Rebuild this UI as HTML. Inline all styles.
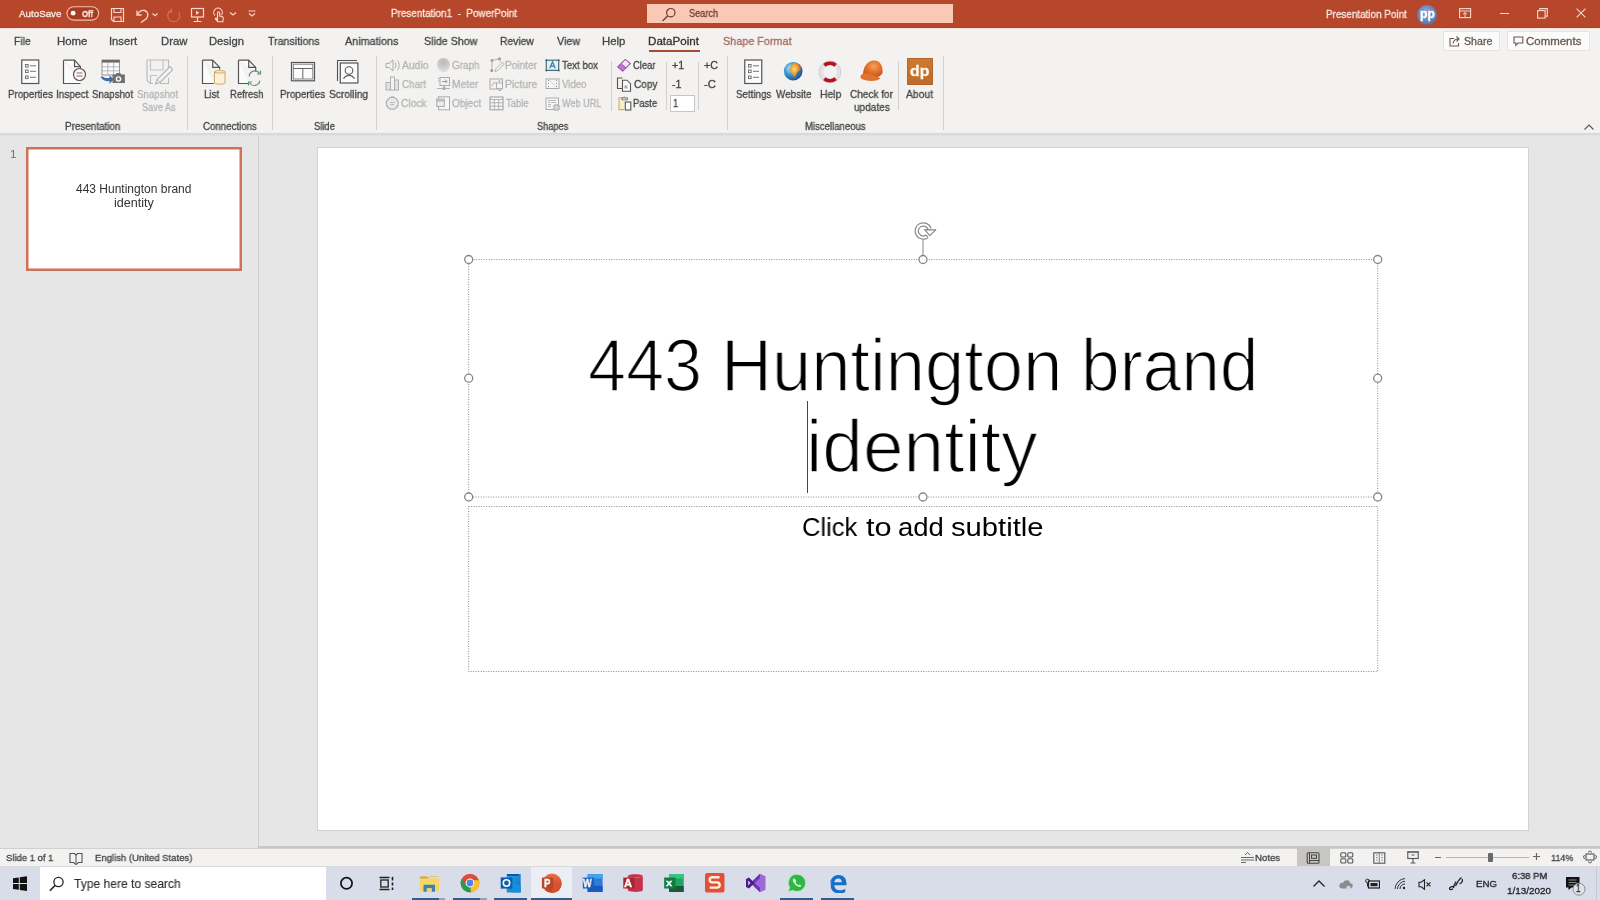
<!DOCTYPE html>
<html><head><meta charset="utf-8"><title>PowerPoint</title>
<style>
*{margin:0;padding:0;box-sizing:border-box}
html,body{width:1600px;height:900px;overflow:hidden;background:#e6e6e6;position:relative;font-family:"Liberation Sans",sans-serif}
.a{position:absolute;display:block}
.t{position:absolute;white-space:pre;transform-origin:0 0;will-change:transform;-webkit-text-stroke:0.3px currentColor}
</style></head><body>
<div class="a" style="left:0px;top:0px;width:1600px;height:28px;background:#b7472a"></div>
<div class="a" style="left:0px;top:28px;width:1600px;height:105px;background:#f3f2f1"></div>
<div class="a" style="left:0px;top:27px;width:1600px;height:1px;background:#a8432b"></div>
<div class="a" style="left:0px;top:28px;width:1600px;height:1px;background:#f6e4dc"></div>
<div class="a" style="left:0px;top:133px;width:1600px;height:3px;background:linear-gradient(#d5d4d3,#e4e4e4)"></div>
<div class="a" style="left:0px;top:136px;width:1600px;height:710px;background:#e6e6e6"></div>
<div class="a" style="left:257.5px;top:136px;width:1.2px;height:712px;background:#cdcdcd"></div>
<div class="a" style="left:318px;top:148px;width:1210px;height:682px;background:#fff;box-shadow:0 0 0 1px #d2d2d2"></div>
<div class="a" style="left:258px;top:846px;width:1342px;height:1.5px;background:#c8c8c8"></div>
<div class="a" style="left:0px;top:848px;width:1600px;height:1px;background:#d0d0d0"></div>
<div class="a" style="left:0px;top:849px;width:1600px;height:17px;background:#f3f2f1"></div>
<div class="a" style="left:0px;top:866px;width:1600px;height:1px;background:#dadada"></div>
<div class="a" style="left:0px;top:867px;width:1600px;height:33px;background:#d9dce9"></div>
<div class="t" style="left:19.00px;top:9.00px;font-size:9.75px;line-height:9.75px;color:#fbeae4;transform:scaleX(1.0041);">AutoSave</div>
<div class="t" style="left:391.21px;top:8.00px;font-size:10.50px;line-height:10.50px;color:#fbeae4;transform:scaleX(0.9418);">Presentation1  -  PowerPoint</div>
<div class="a" style="left:647px;top:4px;width:306px;height:19px;background:#f9c9b6"></div>
<div class="t" style="left:688.59px;top:8.00px;font-size:10.50px;line-height:10.50px;color:#6b3d30;transform:scaleX(0.8729);">Search</div>
<div class="t" style="left:1326.21px;top:9.00px;font-size:11.00px;line-height:11.00px;color:#fbeae4;transform:scaleX(0.8995);">Presentation Point</div>
<svg class="a" style="left:66px;top:6px;" width="34" height="15" viewBox="0 0 34 15"><rect x="1" y="0.7" width="31.6" height="13.4" rx="6.7" fill="#a73c22" stroke="#f3c0ae" stroke-width="1.1"/><circle cx="7.1" cy="7.2" r="2.4" fill="#fff"/></svg>
<div class="t" style="left:81.99px;top:8.71px;font-size:9.75px;line-height:9.75px;color:#fbe6de;font-weight:bold;transform:scaleX(0.7957);">Off</div>
<svg class="a" style="left:110px;top:7px;" width="15" height="16" viewBox="0 0 15 16"><path d="M1.5 1.5h12v13h-10l-2-2z" fill="none" stroke="#f8d8cc" stroke-width="1.2"/><path d="M4 1.5v4h7v-4M4 14.5v-4.5h7v4.5" fill="none" stroke="#f8d8cc" stroke-width="1.1"/></svg>
<svg class="a" style="left:134px;top:8px;" width="26" height="16" viewBox="0 0 26 16"><path d="M3 2.5v4.5h4.5" fill="none" stroke="#f8d8cc" stroke-width="1.3"/><path d="M3.3 6.8C5 3.5 8 2 10.5 2.5 14 3.3 15 7.5 12.5 10.5L7 14.5" fill="none" stroke="#f8d8cc" stroke-width="1.3"/><path d="M18.5 5.5l2.5 2.2 2.5-2.2" fill="none" stroke="#f8d8cc" stroke-width="1.1"/></svg>
<svg class="a" style="left:165px;top:8px;" width="17" height="16" viewBox="0 0 17 16"><path d="M6 2.3A6 6 0 1 0 13.5 4" fill="none" stroke="#dc7058" stroke-width="1.1"/><path d="M6.5 0.8v3.2h-3.2" fill="none" stroke="#dc7058" stroke-width="1.1"/></svg>
<svg class="a" style="left:190px;top:7px;" width="15" height="16" viewBox="0 0 15 16"><rect x="1.5" y="1.5" width="12" height="8.5" fill="none" stroke="#f8d8cc" stroke-width="1.2"/><path d="M6 3.8v4l3.3-2z" fill="#f8d8cc"/><path d="M7.5 10v4.5M3.5 14.5h8" fill="none" stroke="#f8d8cc" stroke-width="1.2"/></svg>
<svg class="a" style="left:211px;top:7px;" width="14" height="17" viewBox="0 0 14 17"><path d="M4 8.5A4.3 4.3 0 1 1 10.5 8" fill="none" stroke="#f8d8cc" stroke-width="1.1"/><path d="M6.5 13V5.8a1.1 1.1 0 0 1 2.2 0V9l2.5.6c.9.3 1.2 1 1.1 2l-.5 3.2H6.8L4.5 12.2c-.6-.8.4-1.6 1-1z" fill="none" stroke="#f8d8cc" stroke-width="1.1"/></svg>
<svg class="a" style="left:229px;top:11px;" width="9" height="6" viewBox="0 0 9 6"><path d="M1 1.5l3 2.5 3-2.5" fill="none" stroke="#f8d8cc" stroke-width="1.2"/></svg>
<svg class="a" style="left:247px;top:9px;" width="10" height="9" viewBox="0 0 10 9"><path d="M1.5 2h7M2 4.5l3 2.5 3-2.5" fill="none" stroke="#f8d8cc" stroke-width="1.2"/></svg>
<svg class="a" style="left:661px;top:7px;" width="16" height="15" viewBox="0 0 16 15"><circle cx="9.8" cy="5.7" r="4.2" fill="none" stroke="#6b3d30" stroke-width="1.2"/><path d="M6.8 8.8L1.5 14" stroke="#6b3d30" stroke-width="1.3"/></svg>
<div class="a" style="left:1416.6px;top:4.8px;width:20px;height:20px;border-radius:50%;background:radial-gradient(circle at 45% 40%,#9fb0d6 0%,#6d88bd 45%,#3f5f9f 100%)"></div>
<div class="t" style="left:1419.71px;top:7.60px;font-size:12.00px;line-height:12.00px;color:#fff;font-weight:bold;transform:scaleX(1.0090);">pp</div>
<svg class="a" style="left:1459px;top:8px;" width="13" height="11" viewBox="0 0 13 11"><rect x="0.6" y="0.6" width="11" height="9" fill="none" stroke="#f8d8cc" stroke-width="1.1"/><path d="M0.6 3h11M6 4.5v5M4 6.3l2-1.8 2 1.8" fill="none" stroke="#f8d8cc" stroke-width="1"/></svg>
<div class="a" style="left:1500px;top:13px;width:9px;height:1px;background:#f8d8cc"></div>
<svg class="a" style="left:1537px;top:8px;" width="11" height="11" viewBox="0 0 11 11"><rect x="0.6" y="2.6" width="7.5" height="7.5" fill="none" stroke="#f8d8cc" stroke-width="1.1"/><path d="M2.8 2.6V0.6h7.5v7.5H8.1" fill="none" stroke="#f8d8cc" stroke-width="1.1"/></svg>
<svg class="a" style="left:1576px;top:8px;" width="10" height="10" viewBox="0 0 10 10"><path d="M0.6 0.6l8.8 8.8M9.4 0.6L0.6 9.4" stroke="#f8d8cc" stroke-width="1.1"/></svg>
<div class="t" style="left:13.66px;top:36.00px;font-size:11.00px;line-height:11.00px;color:#444;transform:scaleX(0.9489);">File</div>
<div class="t" style="left:56.59px;top:36.00px;font-size:11.00px;line-height:11.00px;color:#444;transform:scaleX(1.0379);">Home</div>
<div class="t" style="left:109.49px;top:36.00px;font-size:11.00px;line-height:11.00px;color:#444;transform:scaleX(1.0206);">Insert</div>
<div class="t" style="left:160.60px;top:36.00px;font-size:11.00px;line-height:11.00px;color:#444;transform:scaleX(1.0280);">Draw</div>
<div class="t" style="left:209.10px;top:36.00px;font-size:11.00px;line-height:11.00px;color:#444;transform:scaleX(1.0210);">Design</div>
<div class="t" style="left:267.79px;top:36.00px;font-size:11.00px;line-height:11.00px;color:#444;transform:scaleX(0.9659);">Transitions</div>
<div class="t" style="left:345.00px;top:36.00px;font-size:11.00px;line-height:11.00px;color:#444;transform:scaleX(0.9813);">Animations</div>
<div class="t" style="left:423.52px;top:36.00px;font-size:11.00px;line-height:11.00px;color:#444;transform:scaleX(0.9714);">Slide Show</div>
<div class="t" style="left:500.18px;top:36.00px;font-size:11.00px;line-height:11.00px;color:#444;transform:scaleX(0.9375);">Review</div>
<div class="t" style="left:556.95px;top:36.00px;font-size:11.00px;line-height:11.00px;color:#444;transform:scaleX(0.9748);">View</div>
<div class="t" style="left:602.09px;top:36.00px;font-size:11.00px;line-height:11.00px;color:#444;transform:scaleX(1.0336);">Help</div>
<div class="t" style="left:648.07px;top:36.00px;font-size:11.00px;line-height:11.00px;color:#323130;transform:scaleX(1.0559);">DataPoint</div>
<div class="t" style="left:722.51px;top:36.00px;font-size:11.00px;line-height:11.00px;color:#a46a5a;transform:scaleX(0.9836);">Shape Format</div>
<div class="a" style="left:649px;top:49.5px;width:51px;height:2.2px;background:#a84b32"></div>
<div class="a" style="left:1444px;top:32px;width:55px;height:18px;background:#fbfbfb;box-shadow:0 0 0 1px #e6e4e2"></div>
<div class="a" style="left:1508px;top:32px;width:81px;height:18px;background:#fbfbfb;box-shadow:0 0 0 1px #e6e4e2"></div>
<div class="t" style="left:1463.52px;top:37.00px;font-size:10.25px;line-height:10.25px;color:#6d5650;transform:scaleX(1.0381);">Share</div>
<div class="t" style="left:1526.43px;top:37.00px;font-size:10.25px;line-height:10.25px;color:#6d5650;transform:scaleX(1.1173);">Comments</div>
<svg class="a" style="left:1449px;top:35px;" width="12" height="12" viewBox="0 0 12 12"><path d="M5 3.5H1v7.5h8.5V8" fill="none" stroke="#6d5650" stroke-width="1.1"/><path d="M4 8.5c0.5-3 2.5-4.5 5.5-4.5M7.5 1.5L10 4 7.5 6.5" fill="none" stroke="#6d5650" stroke-width="1.1"/></svg>
<svg class="a" style="left:1513px;top:36px;" width="11" height="11" viewBox="0 0 11 11"><path d="M1 1h8.8v6H5L2.8 9.3V7H1z" fill="none" stroke="#6d5650" stroke-width="1.1"/></svg>
<svg class="a" style="left:1583px;top:123px;" width="12" height="8" viewBox="0 0 12 8"><path d="M1.5 6.5L6 2l4.5 4.5" fill="none" stroke="#555" stroke-width="1.1"/></svg>
<div class="t" style="left:7.91px;top:89.00px;font-size:11.00px;line-height:11.00px;color:#444;transform:scaleX(0.8958);">Properties</div>
<div class="t" style="left:55.80px;top:89.00px;font-size:11.00px;line-height:11.00px;color:#444;transform:scaleX(0.9105);">Inspect</div>
<div class="t" style="left:92.06px;top:89.00px;font-size:11.00px;line-height:11.00px;color:#444;transform:scaleX(0.8819);">Snapshot</div>
<div class="t" style="left:137.06px;top:89.00px;font-size:11.00px;line-height:11.00px;color:#b4b4b4;transform:scaleX(0.8819);">Snapshot</div>
<div class="t" style="left:141.59px;top:102.00px;font-size:11.00px;line-height:11.00px;color:#b4b4b4;transform:scaleX(0.8357);">Save As</div>
<div class="t" style="left:65.21px;top:122.00px;font-size:10.00px;line-height:10.00px;color:#444;transform:scaleX(0.9872);">Presentation</div>
<div class="t" style="left:203.71px;top:89.00px;font-size:11.00px;line-height:11.00px;color:#444;transform:scaleX(0.8967);">List</div>
<div class="t" style="left:230.24px;top:89.00px;font-size:11.00px;line-height:11.00px;color:#444;transform:scaleX(0.8671);">Refresh</div>
<div class="t" style="left:202.52px;top:122.00px;font-size:10.00px;line-height:10.00px;color:#444;transform:scaleX(0.9680);">Connections</div>
<div class="t" style="left:280.21px;top:89.00px;font-size:11.00px;line-height:11.00px;color:#444;transform:scaleX(0.8999);">Properties</div>
<div class="t" style="left:328.54px;top:89.00px;font-size:11.00px;line-height:11.00px;color:#444;transform:scaleX(0.9274);">Scrolling</div>
<div class="t" style="left:313.58px;top:122.00px;font-size:10.00px;line-height:10.00px;color:#444;transform:scaleX(0.9368);">Slide</div>
<div class="t" style="left:402.00px;top:60.00px;font-size:10.50px;line-height:10.50px;color:#b4b4b4;transform:scaleX(0.9846);">Audio</div>
<div class="t" style="left:401.51px;top:79.00px;font-size:10.50px;line-height:10.50px;color:#b4b4b4;transform:scaleX(0.9364);">Chart</div>
<div class="t" style="left:401.49px;top:98.00px;font-size:10.50px;line-height:10.50px;color:#b4b4b4;transform:scaleX(0.9718);">Clock</div>
<div class="t" style="left:452.10px;top:60.00px;font-size:10.50px;line-height:10.50px;color:#b4b4b4;transform:scaleX(0.9434);">Graph</div>
<div class="t" style="left:451.77px;top:79.00px;font-size:10.50px;line-height:10.50px;color:#b4b4b4;transform:scaleX(0.9834);">Meter</div>
<div class="t" style="left:452.15px;top:98.00px;font-size:10.50px;line-height:10.50px;color:#b4b4b4;transform:scaleX(0.9541);">Object</div>
<div class="t" style="left:505.19px;top:60.00px;font-size:10.50px;line-height:10.50px;color:#b4b4b4;transform:scaleX(0.9617);">Pointer</div>
<div class="t" style="left:505.17px;top:79.00px;font-size:10.50px;line-height:10.50px;color:#b4b4b4;transform:scaleX(0.9891);">Picture</div>
<div class="t" style="left:505.81px;top:98.00px;font-size:10.50px;line-height:10.50px;color:#b4b4b4;transform:scaleX(0.9012);">Table</div>
<div class="t" style="left:561.95px;top:79.00px;font-size:10.50px;line-height:10.50px;color:#b4b4b4;transform:scaleX(0.9161);">Video</div>
<div class="t" style="left:561.95px;top:98.00px;font-size:10.50px;line-height:10.50px;color:#b4b4b4;transform:scaleX(0.8678);">Web URL</div>
<div class="t" style="left:561.81px;top:60.00px;font-size:10.50px;line-height:10.50px;color:#444;transform:scaleX(0.9227);">Text box</div>
<div class="t" style="left:633.33px;top:60.00px;font-size:10.50px;line-height:10.50px;color:#444;transform:scaleX(0.8949);">Clear</div>
<div class="t" style="left:633.50px;top:79.00px;font-size:10.50px;line-height:10.50px;color:#444;transform:scaleX(0.9586);">Copy</div>
<div class="t" style="left:633.24px;top:98.00px;font-size:10.50px;line-height:10.50px;color:#444;transform:scaleX(0.9014);">Paste</div>
<div class="t" style="left:671.96px;top:60.00px;font-size:10.50px;line-height:10.50px;color:#444;transform:scaleX(1.0207);">+1</div>
<div class="t" style="left:672.02px;top:79.00px;font-size:10.50px;line-height:10.50px;color:#444;transform:scaleX(1.0119);">-1</div>
<div class="t" style="left:704.47px;top:60.00px;font-size:10.50px;line-height:10.50px;color:#444;transform:scaleX(1.0148);">+C</div>
<div class="t" style="left:704.49px;top:79.00px;font-size:10.50px;line-height:10.50px;color:#444;transform:scaleX(1.0745);">-C</div>
<div class="a" style="left:670px;top:95px;width:25px;height:17px;background:#fff;box-shadow:inset 0 0 0 1px #c6c6c6"></div>
<div class="t" style="left:673.31px;top:98.00px;font-size:10.50px;line-height:10.50px;color:#444;transform:scaleX(0.8758);">1</div>
<div class="t" style="left:536.59px;top:122.00px;font-size:10.00px;line-height:10.00px;color:#444;transform:scaleX(0.9215);">Shapes</div>
<div class="t" style="left:736.36px;top:89.00px;font-size:11.00px;line-height:11.00px;color:#444;transform:scaleX(0.8872);">Settings</div>
<div class="t" style="left:775.95px;top:89.00px;font-size:11.00px;line-height:11.00px;color:#444;transform:scaleX(0.8976);">Website</div>
<div class="t" style="left:819.77px;top:89.00px;font-size:11.00px;line-height:11.00px;color:#444;transform:scaleX(0.9443);">Help</div>
<div class="t" style="left:849.80px;top:89.00px;font-size:11.00px;line-height:11.00px;color:#444;transform:scaleX(0.9113);">Check for</div>
<div class="t" style="left:853.75px;top:102.00px;font-size:11.00px;line-height:11.00px;color:#444;transform:scaleX(0.9143);">updates</div>
<div class="t" style="left:906.00px;top:89.00px;font-size:11.00px;line-height:11.00px;color:#444;transform:scaleX(0.9422);">About</div>
<div class="t" style="left:804.73px;top:122.00px;font-size:10.00px;line-height:10.00px;color:#444;transform:scaleX(0.9566);">Miscellaneous</div>
<div class="a" style="left:187px;top:56px;width:1px;height:74px;background:#d2d0ce"></div>
<div class="a" style="left:272px;top:56px;width:1px;height:74px;background:#d2d0ce"></div>
<div class="a" style="left:376px;top:56px;width:1px;height:74px;background:#d2d0ce"></div>
<div class="a" style="left:727px;top:56px;width:1px;height:74px;background:#d2d0ce"></div>
<div class="a" style="left:943px;top:56px;width:1px;height:74px;background:#d2d0ce"></div>
<div class="a" style="left:611px;top:61px;width:1px;height:50px;background:#d2d0ce"></div>
<div class="a" style="left:666px;top:62px;width:1px;height:48px;background:#d2d0ce"></div>
<div class="a" style="left:698px;top:62px;width:1px;height:48px;background:#d2d0ce"></div>
<div class="a" style="left:898px;top:61px;width:1px;height:49px;background:#d2d0ce"></div>
<svg class="a" style="left:21px;top:59px;" width="19" height="26" viewBox="0 0 19 26"><rect x="0.75" y="1" width="17" height="23.5" fill="#fbfbfb" stroke="#555" stroke-width="1.2"/><rect x="4.5" y="5.5" width="2.6" height="2.6" fill="none" stroke="#666" stroke-width="0.9"/><rect x="4.5" y="11" width="2.6" height="2.6" fill="none" stroke="#666" stroke-width="0.9"/><rect x="4.5" y="17" width="2.6" height="2.6" fill="none" stroke="#666" stroke-width="0.9"/><path d="M9 6.8h6M9 12.3h6M9 18.3h6" stroke="#777" stroke-width="1"/></svg>
<svg class="a" style="left:62px;top:59px;" width="25" height="26" viewBox="0 0 25 26"><path d="M1.5 1.2h11l6 6.5v7M12.5 1.2v6.5h6M18.5 24.5H1.5V1.2" fill="#fbfbfb" stroke="#555" stroke-width="1.2"/><circle cx="17.5" cy="15.5" r="6" fill="#fbfbfb" stroke="#555" stroke-width="1.2"/><path d="M14.5 14h6M14.5 17h6" stroke="#b0506a" stroke-width="1.1"/></svg>
<svg class="a" style="left:100px;top:59px;" width="27" height="27" viewBox="0 0 27 27"><rect x="2" y="1" width="17.5" height="15" fill="#fafafa" stroke="#888" stroke-width="0.9"/><rect x="2" y="1" width="17.5" height="2.6" fill="#6a6a6a"/><path d="M7.8 3.5v12.5M13.6 3.5v12.5M2 7.8h17.5M2 11.8h17.5" stroke="#aaa" stroke-width="0.8"/><path d="M12.5 15.5h3l1.2-1.6h3.5l1.2 1.6h3.5v8.5h-12.4z" fill="#6f6f6f"/><circle cx="18.5" cy="20" r="2.8" fill="#fff"/><circle cx="18.5" cy="20" r="1.4" fill="#6f6f6f"/><path d="M0.5 18.3c2.5 3.2 5.5 4.2 9 3.8v2.7l4.3-4.3-4.3-4.3v2.8c-3 0.3-5.5-0.2-7.5-1.8z" fill="#3d709e"/></svg>
<svg class="a" style="left:145px;top:59px;" width="28" height="27" viewBox="0 0 28 27"><path d="M2 1h21.5v11M23.5 19v5.5H15M8 24.5H5.5L2 21.5V1" fill="none" stroke="#b9b9b9" stroke-width="1.1"/><path d="M5.5 1v10h12.5V1M5.5 24.5v-8h7" fill="none" stroke="#c2c2c2" stroke-width="1.1"/><path d="M10.5 25l1.5-4.5 13-13 3 3-13 13z" fill="#f2f2f2" stroke="#b5b5b5" stroke-width="1.1"/><path d="M12 20.5l3 3" stroke="#b5b5b5" stroke-width="1"/></svg>
<svg class="a" style="left:201px;top:59px;" width="26" height="27" viewBox="0 0 26 27"><path d="M1.5 1.2h10.2l7 7.2v2M11.7 1.2v7.2h7M12.8 24.5H1.5V1.2" fill="#fbfbfb" stroke="#555" stroke-width="1.2"/><path d="M13.5 12.8c0-1.6 10.5-1.6 10.5 0v11c0 1.8-10.5 1.8-10.5 0z" fill="#fdf2d8" stroke="#c9a66a" stroke-width="1"/><path d="M13.5 12.8c0 1.6 10.5 1.6 10.5 0" fill="none" stroke="#c9a66a" stroke-width="1"/></svg>
<svg class="a" style="left:237px;top:59px;" width="27" height="28" viewBox="0 0 27 28"><path d="M1.5 1.2h10.2l7 7.2v4M11.7 1.2v7.2h7M12 24.5H1.5V1.2" fill="#fbfbfb" stroke="#555" stroke-width="1.2"/><path d="M12.3 17.5a5.6 5.6 0 0 1 10.2-3.2M22.8 21.5a5.6 5.6 0 0 1-10.2 2.5" fill="none" stroke="#5b9272" stroke-width="1.2"/><path d="M23.5 11.5v3.5H20M11.5 26.5V23H15" fill="none" stroke="#5b9272" stroke-width="1.2"/></svg>
<svg class="a" style="left:290px;top:61px;" width="26" height="21" viewBox="0 0 26 21"><rect x="1.5" y="1.5" width="23" height="18.3" fill="#fbfbfb" stroke="#555" stroke-width="1.2"/><rect x="3.3" y="3.2" width="19.5" height="14.8" fill="none" stroke="#777" stroke-width="0.9"/><path d="M3.3 7.5h19.5M12.8 7.5v10.5" stroke="#666" stroke-width="1"/></svg>
<svg class="a" style="left:336px;top:59px;" width="24" height="26" viewBox="0 0 24 26"><path d="M1.5 22V1.5h19.5" fill="none" stroke="#555" stroke-width="1.1"/><rect x="4.3" y="4" width="17.6" height="20" fill="#fbfbfb" stroke="#555" stroke-width="1.2"/><circle cx="13" cy="11.5" r="3.8" fill="none" stroke="#555" stroke-width="1.1"/><path d="M7.5 19.8c2.8-4.6 8.3-4.6 11 0" fill="none" stroke="#555" stroke-width="1.1"/></svg>
<svg class="a" style="left:385px;top:59px;" width="15" height="13" viewBox="0 0 15 13"><path d="M1 4.5h3l4-3.5v11l-4-3.5h-3z" fill="none" stroke="#aaa" stroke-width="1"/><path d="M10 3.5c1.3 1.7 1.3 4.3 0 6M12.5 1.5c2.2 2.8 2.2 7.2 0 10" fill="none" stroke="#aaa" stroke-width="1"/></svg>
<svg class="a" style="left:385px;top:76px;" width="15" height="15" viewBox="0 0 15 15"><rect x="1" y="6.5" width="4.5" height="7.5" fill="#e2e2e2" stroke="#aaa" stroke-width="0.9"/><rect x="5.5" y="1" width="4" height="13" fill="#f4f4f4" stroke="#aaa" stroke-width="0.9"/><rect x="9.5" y="4" width="4" height="10" fill="#e2e2e2" stroke="#aaa" stroke-width="0.9"/></svg>
<svg class="a" style="left:385px;top:96px;" width="15" height="15" viewBox="0 0 15 15"><circle cx="7.3" cy="7.3" r="6" fill="#e9e9e9" stroke="#a8a8a8" stroke-width="1.1"/><path d="M5 6.5h4.5M5.5 8.5h3.5" stroke="#b5b5b5" stroke-width="0.9"/><path d="M6 0.8h2.6" stroke="#a8a8a8" stroke-width="1"/></svg>
<div class="a" style="left:437px;top:58px;width:12.5px;height:13.5px;border-radius:50%;background:radial-gradient(circle at 50% 25%,#bcbcbc,#c8c8c8 40%,#dedede 75%,#cfcfcf)"></div>
<svg class="a" style="left:436px;top:76px;" width="15" height="15" viewBox="0 0 15 15"><rect x="4" y="1.5" width="9.5" height="8" fill="#f4f4f4" stroke="#aaa" stroke-width="1"/><path d="M6 5.5h5M9 3.5l2 2-2 2" fill="none" stroke="#9a9a9a" stroke-width="1"/><path d="M1 12.5h13M2 2.5h1.5M2 5h1.5" stroke="#aaa" stroke-width="0.9"/><rect x="6.8" y="10.5" width="2.5" height="3.5" fill="#aaa"/></svg>
<svg class="a" style="left:436px;top:96px;" width="15" height="15" viewBox="0 0 15 15"><rect x="2.5" y="0.8" width="11" height="13" fill="#f6f6f6" stroke="#aaa" stroke-width="1"/><rect x="0.8" y="3" width="7.5" height="7.5" fill="#ececec" stroke="#aaa" stroke-width="1"/><path d="M0.8 4.8h7.5" stroke="#aaa" stroke-width="1.2"/></svg>
<svg class="a" style="left:489px;top:57px;" width="16" height="16" viewBox="0 0 16 16"><circle cx="3" cy="3.5" r="1.5" fill="#999"/><circle cx="10.5" cy="1.8" r="1.5" fill="#999"/><circle cx="2.8" cy="13.5" r="1.5" fill="#999"/><path d="M3 3.5l7.5-1.7M3 3.5v10M10.5 1.8l1 3" stroke="#aaa" stroke-width="0.9"/><path d="M6 14.5l1-2.8 6.5-6.5 1.8 1.8-6.5 6.5z" fill="#f2f2f2" stroke="#aaa" stroke-width="0.9"/></svg>
<svg class="a" style="left:489px;top:78px;" width="15" height="14" viewBox="0 0 15 14"><rect x="1" y="1" width="12.5" height="10" fill="none" stroke="#aaa" stroke-width="1"/><path d="M2.5 8l3-4 2 2" fill="none" stroke="#aaa" stroke-width="0.9"/><rect x="7.5" y="5" width="6" height="5.5" fill="#f4f4f4" stroke="#aaa" stroke-width="0.9"/><circle cx="10.5" cy="3" r="0.9" fill="#aaa"/><path d="M9.5 12.5h2.5" stroke="#aaa"/></svg>
<svg class="a" style="left:489px;top:96px;" width="15" height="15" viewBox="0 0 15 15"><rect x="1" y="1" width="13" height="12.8" fill="#f7f7f7" stroke="#999" stroke-width="1"/><path d="M1 3.5h13M1 6.8h13M1 10.2h13M5.3 3.5v10.3M9.7 3.5v10.3" stroke="#aaa" stroke-width="0.9"/></svg>
<svg class="a" style="left:545px;top:59px;" width="15" height="13" viewBox="0 0 15 13"><rect x="1.3" y="1.2" width="12.4" height="10.2" fill="#dcf1f8" stroke="#4b6b78" stroke-width="1.2"/><circle cx="1.3" cy="1.2" r="1" fill="#4b6b78"/><circle cx="13.7" cy="1.2" r="1" fill="#4b6b78"/><circle cx="1.3" cy="11.4" r="1" fill="#4b6b78"/><circle cx="13.7" cy="11.4" r="1" fill="#4b6b78"/><path d="M4.8 9.3l2.7-6.5 2.7 6.5M5.7 7.2h3.6" fill="none" stroke="#3b7ba6" stroke-width="1.2"/></svg>
<svg class="a" style="left:545px;top:78px;" width="15" height="12" viewBox="0 0 15 12"><rect x="1" y="1" width="13" height="9.5" fill="#f6f6f6" stroke="#aaa" stroke-width="1"/><path d="M3.5 2v1.2M3.5 5v1.2M3.5 8v1.2M11.5 2v1.2M11.5 5v1.2M11.5 8v1.2" stroke="#999" stroke-width="1"/><path d="M5 2.5l5.5 6" stroke="#ccc" stroke-width="0.8"/></svg>
<svg class="a" style="left:545px;top:97px;" width="16" height="14" viewBox="0 0 16 14"><rect x="1" y="1" width="12.5" height="11.5" fill="#f6f6f6" stroke="#aaa" stroke-width="1"/><path d="M3 3.5h8M3 5.5h2.5M6.5 5.5h4.5M3 7.5h3M3 9.5h3" stroke="#b0b0b0" stroke-width="0.9"/><circle cx="11.5" cy="10.5" r="3.3" fill="#c4c4c4" stroke="#aaa" stroke-width="0.6"/><path d="M8.5 10.5h6M11.5 7.5v6" stroke="#e8e8e8" stroke-width="0.6"/></svg>
<svg class="a" style="left:616px;top:58px;" width="16" height="14" viewBox="0 0 16 14"><path d="M1.8 9l7.5-7.6 5 4.2-7.6 7.3z" fill="#f8e6f8" stroke="#9b53b1" stroke-width="1.1"/><path d="M1.8 9l3.3-3.3 5 4.2-3.4 3.2z" fill="#c476d4" stroke="#9b53b1" stroke-width="1"/></svg>
<svg class="a" style="left:616px;top:77px;" width="16" height="15" viewBox="0 0 16 15"><path d="M6.5 1h-5v10.5h5" fill="none" stroke="#555" stroke-width="1.1"/><path d="M6.5 3.2h4.5l3.5 3.5v7.5h-8z" fill="#fbfbfb" stroke="#555" stroke-width="1.1"/><rect x="8.5" y="8.5" width="3" height="3" fill="#aaa"/></svg>
<svg class="a" style="left:617px;top:96px;" width="15" height="15" viewBox="0 0 15 15"><path d="M7.5 1.8H2v11.8h5" fill="#faeec8" stroke="#c9ad6c" stroke-width="1.1"/><path d="M5 1.8h5.5v2H5z" fill="#fafafa" stroke="#777" stroke-width="0.9"/><path d="M4.5 3.5L7 0.8 10 3.5" fill="none" stroke="#888" stroke-width="0.9"/><rect x="8.3" y="6" width="5.5" height="8" fill="#fbfbfb" stroke="#555" stroke-width="1.1"/></svg>
<svg class="a" style="left:744px;top:59px;" width="19" height="26" viewBox="0 0 19 26"><rect x="0.75" y="1" width="17" height="23.5" fill="#fbfbfb" stroke="#555" stroke-width="1.2"/><rect x="4.5" y="5.5" width="2.6" height="2.6" fill="none" stroke="#666" stroke-width="0.9"/><rect x="4.5" y="11" width="2.6" height="2.6" fill="none" stroke="#666" stroke-width="0.9"/><rect x="4.5" y="17" width="2.6" height="2.6" fill="none" stroke="#666" stroke-width="0.9"/><path d="M9 6.8h6M9 12.3h6M9 18.3h6" stroke="#777" stroke-width="1"/></svg>
<svg class="a" style="left:783px;top:61px;" width="21" height="21" viewBox="0 0 21 21"><defs><radialGradient id="gb" cx="35%" cy="35%" r="70%"><stop offset="0" stop-color="#bfe6f5"/><stop offset="0.45" stop-color="#3d9bd6"/><stop offset="1" stop-color="#1e4f8f"/></radialGradient><radialGradient id="go" cx="40%" cy="40%" r="60%"><stop offset="0" stop-color="#f7e07a"/><stop offset="0.6" stop-color="#e8922e"/><stop offset="1" stop-color="#9c5a22"/></radialGradient></defs><circle cx="10.2" cy="10.2" r="9.3" fill="url(#gb)"/><path d="M9 2.5c3-1.5 8 0 9.5 5-1 2-3 2.5-4.5 3.5-1 2-1 5-3 6.5-1.5-2-1-4.5-3-6 -1.5-1 -2-3 -1-5 1-1.5 2.5-1.5 2-4z" fill="url(#go)"/></svg>
<svg class="a" style="left:818px;top:60px;" width="24" height="24" viewBox="0 0 24 24"><circle cx="12" cy="12" r="9" fill="none" stroke="#e4e0e4" stroke-width="4.2"/><path d="M6.3 5.3A9 9 0 0 1 17.7 5.3M17.7 18.7A9 9 0 0 1 6.3 18.7" fill="none" stroke="#b5121f" stroke-width="4"/><circle cx="12" cy="12" r="11" fill="none" stroke="#c8c0c4" stroke-width="0.6"/></svg>
<svg class="a" style="left:859px;top:59px;" width="26" height="23" viewBox="0 0 26 23"><defs><radialGradient id="hm" cx="55%" cy="35%" r="65%"><stop offset="0" stop-color="#f7a060"/><stop offset="0.5" stop-color="#e5752b"/><stop offset="1" stop-color="#c45a18"/></radialGradient></defs><path d="M4 16c0-9 5-14.5 11-14.5 6.5 0 9 6 8.5 12.5-1 2-3 3.5-5 4z" fill="url(#hm)"/><path d="M1.5 17.5c1-3 4-4 9-2.5 4 1 8 2.5 11 4.5-3 2.5-9 3-14 2-3.5-0.8-6.5-2-6-4z" fill="#e27030"/></svg>
<div class="a" style="left:907px;top:58px;width:26px;height:27px;background:linear-gradient(#d07a2e,#bd6a2c);box-shadow:inset 0 0 0 1px #b5652a"></div>
<div class="t" style="left:910.37px;top:62.75px;font-size:15.00px;line-height:15.00px;color:#fdf6ea;font-weight:bold;transform:scaleX(1.0526);">dp</div>
<div class="a" style="left:26px;top:147px;width:216px;height:124px;background:#fff;box-shadow:inset 0 0 0 2.5px #cf7158"></div>
<div class="t" style="left:10.14px;top:148.00px;font-size:11.75px;line-height:11.75px;color:#a0604c;transform:scaleX(0.9782);-webkit-text-stroke:0">1</div>
<div class="t" style="left:76.46px;top:183.00px;font-size:12.00px;line-height:12.00px;color:#333;-webkit-text-stroke:0">443 Huntington brand</div>
<div class="t" style="left:113.78px;top:197.00px;font-size:12.00px;line-height:12.00px;color:#333;transform:scaleX(1.0467);-webkit-text-stroke:0">identity</div>
<div class="t" style="left:587.83px;top:329.32px;font-size:73.50px;line-height:73.50px;color:#000;transform:scaleX(0.9291);-webkit-text-stroke:1.6px #fff;">443</div>
<div class="t" style="left:720.96px;top:329.32px;font-size:73.50px;line-height:73.50px;color:#000;transform:scaleX(0.9599);-webkit-text-stroke:1.6px #fff;">Huntington</div>
<div class="t" style="left:1080.99px;top:329.32px;font-size:73.50px;line-height:73.50px;color:#000;transform:scaleX(0.9442);-webkit-text-stroke:1.6px #fff;">brand</div>
<div class="t" style="left:806.45px;top:410.32px;font-size:73.50px;line-height:73.50px;color:#000;transform:scaleX(0.9942);-webkit-text-stroke:1.6px #fff;">identity</div>
<div class="t" style="left:802.47px;top:514.00px;font-size:26.00px;line-height:26.00px;color:#000;transform:scaleX(0.9829);-webkit-text-stroke:0">Click</div>
<div class="t" style="left:865.54px;top:514.00px;font-size:26.00px;line-height:26.00px;color:#000;transform:scaleX(1.1834);-webkit-text-stroke:0">to</div>
<div class="t" style="left:897.90px;top:514.00px;font-size:26.00px;line-height:26.00px;color:#000;transform:scaleX(1.0577);-webkit-text-stroke:0">add</div>
<div class="t" style="left:951.22px;top:514.00px;font-size:26.00px;line-height:26.00px;color:#000;transform:scaleX(1.1227);-webkit-text-stroke:0">subtitle</div>
<svg class="a" style="left:440px;top:200px;" width="970" height="500" viewBox="0 0 970 500"><rect x="28.7" y="59.5" width="909" height="237.5" fill="none" stroke="#8a8a8a" stroke-width="1" stroke-dasharray="1 1.5"/><rect x="28.7" y="306.5" width="909" height="165" fill="none" stroke="#8a8a8a" stroke-width="1" stroke-dasharray="1 1.5"/><path d="M483 40v15.5" stroke="#9a9a9a" stroke-width="1.2"/><circle cx="28.7" cy="59.5" r="4" fill="#fff" stroke="#858585" stroke-width="1.3"/><circle cx="483" cy="59.5" r="4" fill="#fff" stroke="#858585" stroke-width="1.3"/><circle cx="937.7" cy="59.5" r="4" fill="#fff" stroke="#858585" stroke-width="1.3"/><circle cx="28.7" cy="178.2" r="4" fill="#fff" stroke="#858585" stroke-width="1.3"/><circle cx="937.7" cy="178.2" r="4" fill="#fff" stroke="#858585" stroke-width="1.3"/><circle cx="28.7" cy="297" r="4" fill="#fff" stroke="#858585" stroke-width="1.3"/><circle cx="483" cy="297" r="4" fill="#fff" stroke="#858585" stroke-width="1.3"/><circle cx="937.7" cy="297" r="4" fill="#fff" stroke="#858585" stroke-width="1.3"/><path d="M488 37.7A8.2 8.2 0 1 1 491 28.2M486.2 35.1A5 5 0 1 1 488 29.3M488 37.7L486.2 35.1" fill="none" stroke="#8a8a8a" stroke-width="1.25"/><path d="M484.6 29.6L495.8 29.9 489.8 35.6z" fill="#fff" stroke="#8a8a8a" stroke-width="1.2" stroke-linejoin="round"/></svg>
<div class="a" style="left:807px;top:401px;width:1px;height:92px;background:#444"></div>
<div class="t" style="left:5.57px;top:853.00px;font-size:9.75px;line-height:9.75px;color:#444;transform:scaleX(0.9713);">Slide 1 of 1</div>
<div class="t" style="left:95.24px;top:853.00px;font-size:9.75px;line-height:9.75px;color:#444;transform:scaleX(0.9763);">English (United States)</div>
<div class="t" style="left:1255.23px;top:853.00px;font-size:9.75px;line-height:9.75px;color:#444;transform:scaleX(0.9866);">Notes</div>
<div class="a" style="left:1297px;top:848px;width:33px;height:18px;background:#c8c6c4"></div>
<div class="t" style="left:1550.92px;top:853.00px;font-size:9.75px;line-height:9.75px;color:#444;transform:scaleX(0.9242);">114%</div>
<svg class="a" style="left:68px;top:852px;" width="16" height="13" viewBox="0 0 16 13"><path d="M2 1.5h4.5l1.5 1.5 1.5-1.5H14v9l-3.5 0-2.5 2-2.5-2H2z" fill="none" stroke="#555" stroke-width="1.1"/><path d="M8 3v8" stroke="#555" stroke-width="1"/></svg>
<svg class="a" style="left:1240px;top:851px;" width="15" height="13" viewBox="0 0 15 13"><path d="M1 6.5h13M1 9h13M1 11.5h5" stroke="#666" stroke-width="1"/><path d="M5 4l2.5-2.5L10 4" fill="none" stroke="#666" stroke-width="1"/></svg>
<svg class="a" style="left:1306px;top:852px;" width="14" height="12" viewBox="0 0 14 12"><rect x="1.2" y="0.8" width="11.8" height="10.4" rx="1" fill="none" stroke="#444" stroke-width="1.1"/><path d="M3.5 0.8v10.4M3.5 8.5h9.5" stroke="#444" stroke-width="1"/><rect x="5.5" y="3" width="5" height="3.3" fill="none" stroke="#444" stroke-width="1"/></svg>
<svg class="a" style="left:1340px;top:852px;" width="14" height="12" viewBox="0 0 14 12"><rect x="0.8" y="0.8" width="5" height="4.2" rx="1" fill="none" stroke="#555" stroke-width="1.1"/><rect x="7.8" y="0.8" width="5" height="4.2" rx="1" fill="none" stroke="#555" stroke-width="1.1"/><rect x="0.8" y="6.8" width="5" height="4.2" rx="1" fill="none" stroke="#555" stroke-width="1.1"/><rect x="7.8" y="6.8" width="5" height="4.2" rx="1" fill="none" stroke="#555" stroke-width="1.1"/></svg>
<svg class="a" style="left:1373px;top:852px;" width="13" height="12" viewBox="0 0 13 12"><rect x="0.8" y="0.8" width="11" height="10.4" fill="none" stroke="#555" stroke-width="1.1"/><path d="M6.3 0.8v10.4M3 3h1.5M3 5.5h1.5M3 8h1.5M8.3 3h1.5M8.3 5.5h1.5M8.3 8h1.5" stroke="#777" stroke-width="0.9"/></svg>
<svg class="a" style="left:1407px;top:851px;" width="12" height="13" viewBox="0 0 12 13"><rect x="0.8" y="1" width="10.4" height="6.5" fill="none" stroke="#555" stroke-width="1.1"/><path d="M0 1h12M6 7.5v4M3.5 12h5M4.5 4h3" stroke="#555" stroke-width="1.1"/></svg>
<div class="a" style="left:1435px;top:856.5px;width:6px;height:1.3px;background:#666"></div>
<div class="a" style="left:1446px;top:857px;width:83px;height:1px;background:#b5b5b5"></div>
<div class="a" style="left:1487.5px;top:852.5px;width:5px;height:9px;background:#6a6a6a;border-radius:1px"></div>
<svg class="a" style="left:1532px;top:851px;" width="9" height="11" viewBox="0 0 9 11"><path d="M1 5.5h7M4.5 2v7" stroke="#666" stroke-width="1.2"/></svg>
<svg class="a" style="left:1583px;top:850px;" width="14" height="14" viewBox="0 0 14 14"><rect x="3" y="4" width="8" height="6" fill="none" stroke="#555" stroke-width="1.1"/><path d="M5 2.5L7 0.8 9 2.5M5 11.5L7 13.2 9 11.5M1.5 5L0.5 7l1 2M12.5 5l1 2-1 2" fill="none" stroke="#555" stroke-width="1"/></svg>
<div class="a" style="left:40px;top:867px;width:286px;height:33px;background:#fff"></div>
<div class="a" style="left:531.4px;top:867px;width:40.6px;height:33px;background:#eceef5"></div>
<svg class="a" style="left:12px;top:876px;" width="16" height="15" viewBox="0 0 16 15"><path d="M1 2.2L6.8 1.4v5.7H1zM7.8 1.3L15 0.3v6.8H7.8zM1 8.1h5.8v5.7L1 13zM7.8 8.1H15v6.8l-7.2-1z" fill="#111"/></svg>
<svg class="a" style="left:48px;top:876px;" width="17" height="16" viewBox="0 0 17 16"><circle cx="10.5" cy="6" r="4.6" fill="none" stroke="#222" stroke-width="1.3"/><path d="M7.2 9.4L1.8 14.8" stroke="#222" stroke-width="1.5"/></svg>
<svg class="a" style="left:339px;top:876px;" width="16" height="16" viewBox="0 0 16 16"><circle cx="7.5" cy="7.3" r="5.6" fill="none" stroke="#111" stroke-width="1.7"/></svg>
<svg class="a" style="left:378px;top:876px;" width="18" height="16" viewBox="0 0 18 16"><path d="M1.5 1.5h10M1.5 13.5h10" stroke="#222" stroke-width="1.3"/><rect x="2.8" y="4" width="7.4" height="7" fill="none" stroke="#222" stroke-width="1.3"/><path d="M14.5 1.5v3M14.5 6.5v3M14.5 11.5v2.5" stroke="#222" stroke-width="1.6"/><circle cx="14.5" cy="1.5" r="0.8" fill="#222"/></svg>
<div class="a" style="left:412.3px;top:898px;width:26.69999999999999px;height:2px;background:#2f5d8f"></div>
<div class="a" style="left:453px;top:898px;width:27px;height:2px;background:#2f5d8f"></div>
<div class="a" style="left:494px;top:898px;width:33.39999999999998px;height:2px;background:#2f5d8f"></div>
<div class="a" style="left:531.4px;top:898px;width:40.60000000000002px;height:2px;background:#2f5d8f"></div>
<div class="a" style="left:780px;top:898px;width:33px;height:2px;background:#2f5d8f"></div>
<div class="a" style="left:821px;top:898px;width:33px;height:2px;background:#2f5d8f"></div>
<div class="a" style="left:439px;top:898px;width:6.3px;height:2px;background:#8fa3bb"></div>
<div class="a" style="left:480px;top:898px;width:6.5px;height:2px;background:#8fa3bb"></div>
<svg class="a" style="left:418px;top:875px;" width="23" height="18" viewBox="0 0 23 18"><path d="M2 1.5h7l1.5 1.5H2z" fill="#d7a32a"/><path d="M1.5 3.5h19.5v13H1.5z" fill="#f6d56a"/><path d="M1.5 3.5h9l1.5-2h8.5" fill="none" stroke="#e9bd45" stroke-width="0.8"/><path d="M5.5 16.8v-7h11.5v7h-3.3v-3.5h-4.9v3.5z" fill="#3a82b3"/><rect x="8.8" y="13.3" width="4.9" height="3.5" fill="#f1d36d"/></svg>
<svg class="a" style="left:460px;top:873px;" width="20" height="20" viewBox="0 0 20 20"><circle cx="10" cy="10" r="9.3" fill="#dd4b3d"/><path d="M10 10L1.9 14.6A9.3 9.3 0 0 0 10 19.3 9.3 9.3 0 0 0 11 19.25z" fill="#1f9e4e"/><path d="M1.9 14.6A9.3 9.3 0 0 1 1.6 5.9L6 12z" fill="#1f9e4e"/><path d="M10 10l1 9.25A9.3 9.3 0 0 0 18.9 7.3H10z" fill="#f6c22c"/><circle cx="10" cy="10" r="4.4" fill="#fff"/><circle cx="10" cy="10" r="3.4" fill="#4a84e6"/></svg>
<svg class="a" style="left:499px;top:873px;" width="24" height="21" viewBox="0 0 24 21"><defs><linearGradient id="ol" x1="0" y1="0" x2="1" y2="1"><stop offset="0" stop-color="#28a8ea"/><stop offset="1" stop-color="#0f6cbd"/></linearGradient></defs><rect x="7.7" y="1" width="14" height="18.4" fill="url(#ol)"/><rect x="8" y="1" width="12" height="2" fill="#0a5aa8"/><path d="M12 9l9.7 3.5v6.9H12z" fill="#1490df"/><rect x="1.7" y="4.4" width="11.7" height="11.2" fill="#0b5fae"/><circle cx="7.5" cy="10" r="3.2" fill="none" stroke="#fff" stroke-width="1.6"/></svg>
<svg class="a" style="left:541px;top:873px;" width="23" height="21" viewBox="0 0 23 21"><defs><linearGradient id="pp" x1="0" y1="0" x2="0" y2="1"><stop offset="0" stop-color="#ed6c47"/><stop offset="1" stop-color="#c43e1c"/></linearGradient></defs><circle cx="11" cy="10.3" r="9.7" fill="url(#pp)"/><path d="M11 10.3h9.7A9.7 9.7 0 0 1 11 20z" fill="#d35230"/><rect x="0.9" y="4.6" width="11.2" height="10.9" fill="#b7472a"/></svg>
<div class="t" style="left:543.87px;top:878.15px;font-size:11.00px;line-height:11.00px;color:#fff;font-weight:bold;transform:scaleX(0.8772);">P</div>
<svg class="a" style="left:582px;top:873px;" width="22" height="20" viewBox="0 0 22 20"><rect x="5.6" y="1.2" width="15" height="17.7" fill="#2b7cd3"/><rect x="5.6" y="1.2" width="15" height="4.4" fill="#41a5ee"/><rect x="5.6" y="12.8" width="15" height="6.1" fill="#185abd"/><rect x="0.8" y="4.6" width="11.2" height="10.9" fill="#185abd"/></svg>
<div class="t" style="left:583.30px;top:878.15px;font-size:11.00px;line-height:11.00px;color:#fff;font-weight:bold;transform:scaleX(0.8369);">W</div>
<svg class="a" style="left:622px;top:873px;" width="22" height="20" viewBox="0 0 22 20"><path d="M5.8 3c0-2.5 15-2.5 15 0v14c0 2.5-15 2.5-15 0z" fill="#c4314b"/><path d="M5.8 3c0 2.2 15 2.2 15 0" fill="none" stroke="#e8596b" stroke-width="1"/><rect x="1.3" y="4.6" width="11.2" height="10.9" fill="#a4262c"/></svg>
<div class="t" style="left:623.92px;top:878.15px;font-size:11.00px;line-height:11.00px;color:#fff;font-weight:bold;transform:scaleX(1.0176);">A</div>
<svg class="a" style="left:663px;top:873px;" width="22" height="20" viewBox="0 0 22 20"><rect x="6" y="1" width="14.7" height="18" fill="#21a366"/><rect x="6" y="1" width="14.7" height="4.5" fill="#33c481"/><rect x="6" y="13" width="14.7" height="6" fill="#185c37"/><rect x="1.2" y="4.5" width="11.3" height="11" fill="#107c41"/></svg>
<div class="t" style="left:665.89px;top:880.49px;font-size:8.25px;line-height:8.25px;color:#fff;font-weight:bold;transform:scaleX(1.3468);">x</div>
<svg class="a" style="left:704px;top:872px;" width="22" height="22" viewBox="0 0 22 22"><rect x="1" y="1" width="19.5" height="19.5" rx="2" fill="#e64e36"/><path d="M15.5 5.3H8.5c-2 0-2.8 1-2.8 2.6s0.8 2.5 2.8 2.5h4.4c2 0 2.8 1 2.8 2.6s-0.8 2.6-2.8 2.6H5.7" fill="none" stroke="#fff3e0" stroke-width="2.4"/></svg>
<svg class="a" style="left:745px;top:873px;" width="22" height="21" viewBox="0 0 22 21"><path d="M15 0.8l5.5 2.5v13.4L15 19.3 5.5 10z" fill="#9b6ad6"/><path d="M15 0.8L5.5 10 15 19.3l0-4.5-5.5-4.8L15 5.3z" fill="#6c35b5"/><path d="M1 6l3 -1.5 5.5 5.5-5.5 5.5L1 14z" fill="#4b1d8c"/><path d="M3.2 7.5v5l2.3-2.5z" fill="#d8d0ee"/></svg>
<svg class="a" style="left:787px;top:873px;" width="20" height="20" viewBox="0 0 20 20"><path d="M10 1.3a8.6 8.6 0 0 1 0 17.2 8.6 8.6 0 0 1-4.2-1.1L1.3 18.7l1.3-4.2A8.6 8.6 0 0 1 10 1.3z" fill="#2fb645" stroke="#c8f0cc" stroke-width="0.7"/><path d="M6.5 5.5c-0.8 0.8-1 2 0 3.7 1 1.8 2.8 3.6 4.6 4.4 1.6 0.7 2.6 0.4 3.4-0.5l-1.8-1.6-1.2 0.7c-1.2-0.5-2.5-1.8-3-3l0.7-1.2L7.7 5.4z" fill="#d6f8da"/></svg>
<svg class="a" style="left:828px;top:874px;" width="20" height="19" viewBox="0 0 20 19"><path d="M2 9.5C2.5 3.5 7 1 10.8 1 15.8 1 18.5 4.6 18.5 9.8v1.5H6.2c0.2 3.3 2.5 5 5.5 5 2 0 3.8-0.6 5.5-1.6v3.2c-1.8 1-3.8 1.5-6.3 1.5-5 0-8.2-3.2-8.2-8 0-2.8 1-5 3.2-6.6C4.5 5.8 3 7.5 2 9.5zM6.3 8.2h7.5c0-2.3-1.3-3.7-3.6-3.7-2.2 0-3.6 1.5-3.9 3.7z" fill="#1570c8"/></svg>
<svg class="a" style="left:1312px;top:879px;" width="14" height="9" viewBox="0 0 14 9"><path d="M1.5 7.5l5.5-5.5 5.5 5.5" fill="none" stroke="#222" stroke-width="1.3"/></svg>
<svg class="a" style="left:1338px;top:878px;" width="15" height="13" viewBox="0 0 15 13"><path d="M3.5 10.5h8.5a2.6 2.6 0 0 0 0.3-5.2A3.8 3.8 0 0 0 5 4.8a2.9 2.9 0 0 0-1.5 5.7z" fill="#8c8c8c"/><circle cx="10.5" cy="10" r="2.2" fill="#cfd8e6"/></svg>
<svg class="a" style="left:1365px;top:878px;" width="15" height="11" viewBox="0 0 15 11"><rect x="3.5" y="3" width="11" height="7" fill="none" stroke="#222" stroke-width="1.2"/><rect x="5.5" y="5" width="7" height="3.2" fill="#222"/><circle cx="2.5" cy="3" r="1.8" fill="none" stroke="#222" stroke-width="1"/><path d="M2.5 5v3.5" stroke="#222" stroke-width="1"/></svg>
<svg class="a" style="left:1394px;top:877px;" width="12" height="13" viewBox="0 0 12 13"><path d="M1 12A11 11 0 0 1 11 1.5M3.5 12A8.2 8.2 0 0 1 11 4.2M6 12A5.5 5.5 0 0 1 11 7" fill="none" stroke="#333" stroke-width="1"/><circle cx="10" cy="11" r="1.2" fill="#222"/></svg>
<svg class="a" style="left:1418px;top:879px;" width="14" height="11" viewBox="0 0 14 11"><path d="M1 3.3h2.2L6.5 0.8v9.5L3.2 7.8H1z" fill="none" stroke="#222" stroke-width="1.1"/><path d="M8.5 3.3l4 4M12.5 3.3l-4 4" stroke="#222" stroke-width="1.1"/></svg>
<svg class="a" style="left:1448px;top:876px;" width="16" height="15" viewBox="0 0 16 15"><path d="M13.5 1.5c-2 1.5-4 4.5-6 8.5M14 3c1 1.5 0.5 3.5-2.5 5M8 5.5c-1.5 2.5-2.5 5-2.5 6.5M6.5 10.5c-2.5-0.5-5 0.8-5 2.2 0 1 2 1.2 3.5 0" fill="none" stroke="#222" stroke-width="1.3"/></svg>
<svg class="a" style="left:1565px;top:876px;" width="22" height="20" viewBox="0 0 22 20"><path d="M1 1h13.5v10.5H6.5L3.5 14v-2.5H1z" fill="#111"/><path d="M3.5 4h8M3.5 6.5h8M3.5 9h6" stroke="#9a9a9a" stroke-width="0.9"/><circle cx="14" cy="13.2" r="6" fill="#e1e3ec" stroke="#8a8a8a" stroke-width="1"/></svg>
<div class="t" style="left:1576.40px;top:884.00px;font-size:10.00px;line-height:10.00px;color:#222;transform:scaleX(0.8046);">1</div>
<div class="a" style="left:1596px;top:867px;width:1px;height:33px;background:#c5c8d4"></div>
<div class="t" style="left:73.51px;top:878.00px;font-size:12.50px;line-height:12.50px;color:#2a2a2a;transform:scaleX(0.9659);-webkit-text-stroke:0.1px #2a2a2a">Type here to search</div>
<div class="t" style="left:1476.23px;top:879.00px;font-size:9.75px;line-height:9.75px;color:#222;transform:scaleX(0.9926);">ENG</div>
<div class="t" style="left:1511.53px;top:871.00px;font-size:9.75px;line-height:9.75px;color:#222;transform:scaleX(0.9714);">6:38 PM</div>
<div class="t" style="left:1507.26px;top:886.00px;font-size:9.75px;line-height:9.75px;color:#222;transform:scaleX(1.0162);">1/13/2020</div>
</body></html>
